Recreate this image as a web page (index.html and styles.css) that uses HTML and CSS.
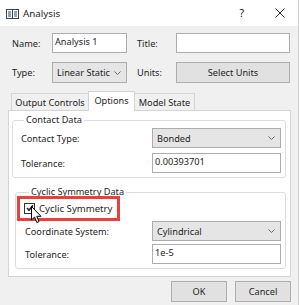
FILE: index.html
```html
<!DOCTYPE html>
<html>
<head>
<meta charset="utf-8">
<link rel="stylesheet" href="styles.css">
</head>
<body>
<div class="window">
  <div class="titlebar">
    <svg class="app-icon" width="13" height="10" viewBox="0 0 13 10">
      <rect x="0.5" y="0.5" width="12" height="9" fill="#fff" stroke="#34465a"/>
      <line x1="6.5" y1="0.5" x2="6.5" y2="9.5" stroke="#34465a"/>
      <line x1="2" y1="3" x2="5" y2="3" stroke="#34465a"/>
      <line x1="2" y1="5" x2="5" y2="5" stroke="#34465a"/>
      <line x1="2" y1="7" x2="5" y2="7" stroke="#34465a"/>
      <line x1="8" y1="3" x2="11" y2="3" stroke="#34465a"/>
      <line x1="8" y1="5" x2="11" y2="5" stroke="#34465a"/>
      <line x1="8" y1="7" x2="11" y2="7" stroke="#34465a"/>
    </svg>
    <span class="title">Analysis</span>
    <span class="tb-help">?</span>
    <svg class="tb-close" width="10" height="10" viewBox="0 0 10 10">
      <line x1="0.5" y1="0.5" x2="9.5" y2="9.5" stroke="#111" stroke-width="0.9"/>
      <line x1="9.5" y1="0.5" x2="0.5" y2="9.5" stroke="#111" stroke-width="0.9"/>
    </svg>
  </div>

  <div class="body">
    <div class="fields">
      <span class="lbl">Name:</span>
      <div class="textbox">Analysis 1</div>
      <span class="lbl lbl2">Title:</span>
      <div class="textbox"></div>
      <span class="lbl">Type:</span>
      <div class="combo"><span>Linear Static</span><svg class="chev" width="7" height="4" viewBox="0 0 7 4"><polyline points="0.5,0.5 3.5,3.5 6.5,0.5" fill="none" stroke="#6a6a6a"/></svg></div>
      <span class="lbl lbl2">Units:</span>
      <div class="btn">Select Units</div>
    </div>

    <div class="tabs">
      <div class="tab tab-output">Output Controls</div>
      <div class="tab tab-options active">Options</div>
      <div class="tab tab-model">Model State</div>
    </div>

    <div class="panel">
      <fieldset class="group group-contact">
        <legend>Contact Data</legend>
        <div class="grid">
          <span class="lbl">Contact Type:</span>
          <div class="combo"><span>Bonded</span><svg class="chev" width="7" height="4" viewBox="0 0 7 4"><polyline points="0.5,0.5 3.5,3.5 6.5,0.5" fill="none" stroke="#6a6a6a"/></svg></div>
          <span class="lbl">Tolerance:</span>
          <div class="textbox">0.00393701</div>
        </div>
      </fieldset>

      <fieldset class="group group-cyclic">
        <legend>Cyclic Symmetry Data</legend>
        <div class="check-row">
          <span class="checkbox">
            <svg width="8" height="8" viewBox="0 0 8 8"><polyline points="1,4 3,6.3 7,1.2" fill="none" stroke="#222" stroke-width="1.6"/></svg>
          </span>
          <span class="check-label">Cyclic Symmetry</span>
        </div>
        <div class="grid grid-cyclic">
          <span class="lbl">Coordinate System:</span>
          <div class="combo"><span>Cylindrical</span><svg class="chev" width="7" height="4" viewBox="0 0 7 4"><polyline points="0.5,0.5 3.5,3.5 6.5,0.5" fill="none" stroke="#6a6a6a"/></svg></div>
          <span class="lbl">Tolerance:</span>
          <div class="textbox">1e-5</div>
        </div>
      </fieldset>
    </div>

    <div class="actions">
      <div class="btn btn-action">OK</div>
      <div class="btn btn-action">Cancel</div>
    </div>
  </div>

  <div class="highlight"></div>
  <svg class="cursor" width="12" height="18" viewBox="0 0 12 18">
    <path d="M0.5,0.5 L0.5,14 L3.6,11 L5.8,16.5 L8,15.6 L5.8,10.3 L10,10.3 Z" fill="#fff" stroke="#000" stroke-width="1" stroke-linejoin="round"/>
  </svg>
</div>
</body>
</html>
```

FILE: styles.css
```css
* { box-sizing: border-box; }

html, body {
  margin: 0;
  padding: 0;
}

body {
  width: 299px;
  height: 305px;
  overflow: hidden;
  background: #f0f0f0;
  font-family: "Segoe UI", "Noto Sans", "Open Sans", sans-serif;
  font-size: 9.2px;
  color: #1e1e1e;
}

.window {
  position: relative;
  width: 299px;
  height: 305px;
  background: #f0f0f0;
  border-right: 1px solid #cfcfcf;
}

/* title bar */
.titlebar {
  height: 26px;
  background: #fff;
  display: flex;
  align-items: center;
  padding-left: 6px;
}
.app-icon { display: block; margin-top: 1px; }
.title {
  margin-left: 4px;
  font-size: 9.8px;
}
.tb-help {
  margin-left: auto;
  font-size: 10.5px;
  color: #111;
  margin-right: 31px;
}
.tb-close {
  display: block;
  margin-right: 13px;
}

/* body */
.body {
  padding: 0 8px;
}

.fields {
  margin-top: 7px;
  margin-left: 4px;
  display: grid;
  grid-template-columns: 40px 75px 49px 114px;
  grid-template-rows: 20px 21px;
  row-gap: 9px;
  align-items: center;
}
.lbl { white-space: nowrap; }
.lbl2 { padding-left: 10px; }

.textbox {
  height: 20px;
  background: #fff;
  border: 1px solid #abadb3;
  padding: 1px 2px 0;
  line-height: 14px;
  white-space: nowrap;
  overflow: hidden;
}

.combo {
  height: 100%;
  min-height: 20px;
  background: #e5e5e5;
  border: 1px solid #acacac;
  display: flex;
  align-items: center;
  justify-content: space-between;
  padding: 0 5px 0 4px;
  white-space: nowrap;
}
.chev { display: block; flex: none; }

.btn {
  height: 100%;
  background: #e1e1e1;
  border: 1px solid #adadad;
  display: flex;
  align-items: center;
  justify-content: center;
}

/* tabs */
.tabs {
  margin-top: 8px;
  height: 19px;
  padding-left: 3px;
  display: flex;
  align-items: flex-end;
}
.tab {
  height: 17px;
  border: 1px solid #d4d4d4;
  border-bottom: none;
  background: #f0f0f0;
  display: flex;
  align-items: center;
  justify-content: center;
  white-space: nowrap;
}
.tab-output { width: 77px; border-right: none; }
.tab-options { width: 47px; }
.tab-model { width: 60px; border-left: none; }
.tab.active {
  height: 20px;
  margin-bottom: -1px;
  background: #fff;
  position: relative;
  z-index: 1;
  padding-bottom: 2px;
}

/* panel */
.panel {
  width: 283px;
  border: 1px solid #d4d4d4;
  background: #fff;
  padding: 3px 4px 7px 3px;
}

.group {
  margin: 0;
  border: 1px solid #dcdcdc;
  border-radius: 3px;
  padding: 2px 4px 4px 8px;
  min-width: 0;
}
.group legend {
  padding: 0 2px;
  margin-left: 3px;
  line-height: 12px;
  height: 12px;
}

.grid {
  display: grid;
  grid-template-columns: 131px 129px;
  grid-template-rows: 20px 20px;
  row-gap: 5px;
  align-items: center;
}

.group-cyclic {
  margin-top: 8px;
  margin-left: 3px;
  padding-left: 9px;
  padding-top: 3px;
}
.group-cyclic legend { margin-left: 4px; }

.check-row {
  height: 14px;
  display: flex;
  align-items: center;
  margin-left: -1px;
}
.checkbox {
  width: 11px;
  height: 11px;
  border: 1px solid #333;
  background: #fff;
  display: flex;
  align-items: center;
  justify-content: center;
}
.checkbox svg { display: block; }
.check-label {
  margin-left: 4px;
  font-size: 9.6px;
}

.grid-cyclic {
  margin-top: 6px;
  grid-template-columns: 127px 129px;
  row-gap: 3px;
}

/* bottom buttons */
.actions {
  margin-top: 4px;
  height: 21px;
  display: flex;
  justify-content: flex-end;
  gap: 8px;
  margin-right: -1px;
}
.btn-action { width: 56px; }

/* overlays */
.highlight {
  position: absolute;
  left: 17px;
  top: 196px;
  width: 103px;
  height: 25px;
  border: 3px solid #e8403c;
}
.cursor {
  position: absolute;
  left: 31px;
  top: 206px;
}
```
